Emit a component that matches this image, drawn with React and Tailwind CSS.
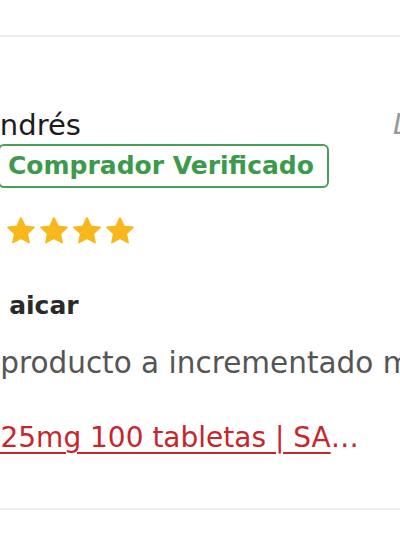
import React from 'react';

function Star({ className = '' }) {
    return (
        <svg viewBox="0 0 24 24" className={`w-[32px] h-[32px] shrink-0 ${className}`} fill="#f8b81c">
            <path d="M12 2.2l2.95 6.2 6.8.85-5 4.7 1.3 6.75L12 17.4l-6.05 3.3 1.3-6.75-5-4.7 6.8-.85z" strokeLinejoin="round" stroke="#f8b81c" strokeWidth="1.2" />
        </svg>
    );
}

export default function App() {
    return (
        <div className="w-[400px] h-[533px] bg-white overflow-hidden" style={{ fontFamily: '"DejaVu Sans", sans-serif' }}>
            <div className="h-[35px]" />
            {/* review card, cropped on both sides */}
            <div className="border-t-2 border-b-2 border-[#ececec] h-[475px] -ml-[120px] w-[640px] pr-[2px]">
                <div className="flex justify-between items-start pt-[71px] pl-[100px]">
                    <div className="text-[29px] leading-[34px] text-[#1c1c1c]">Andrés</div>
                    <div className="text-[28px] leading-[34px] italic text-[#999]">Dic 2023</div>
                </div>
                <div className="mt-[2px] ml-[118px] inline-flex items-center h-[44px] border-2 border-[#4b9d57] rounded-[6px] pl-[8px] pr-[13px]">
                    <span className="text-[25px] font-bold text-[#3d9a4b] leading-[30px]">Comprador Verificado</span>
                </div>
                <div className="flex gap-[1px] mt-[27px] ml-[86px]">
                    <Star className="mr-[6px]" /><Star /><Star /><Star /><Star />
                </div>
                <div className="mt-[44px] ml-[32px] text-[25px] font-bold text-[#2a2a2a] leading-[30px]">Buena aicar</div>
                <div className="mt-[25px] ml-[84px] text-[29.5px] text-[#555] leading-[34px] whitespace-nowrap">El producto a incrementado mi rendimiento</div>
                <div className="mt-[41px] ml-[26px] w-[456px] truncate text-[28px] leading-[34px] text-[#c8252c] underline underline-offset-[5px] decoration-[2px]">
                    AICAR 25mg 100 tabletas | SARMS Mexico
                </div>
            </div>
        </div>
    );
}
